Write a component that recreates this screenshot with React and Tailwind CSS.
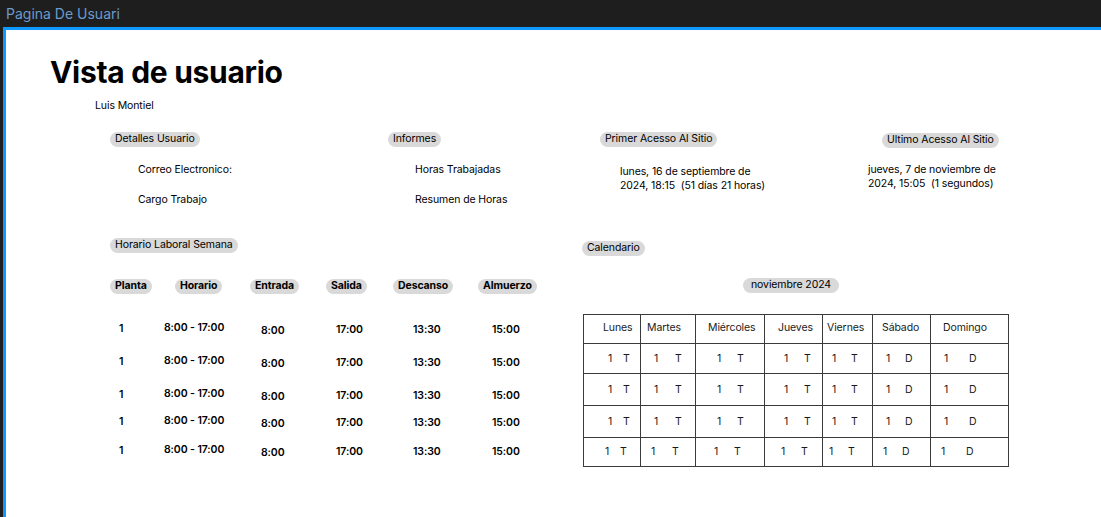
import React from "react";

const SCHEDULE_COLS = [
  { label: "Planta", w: "w-[54px]", hm: "ml-0", dm: "ml-[9px]", pt: "pt-[1px]", val: "1" },
  { label: "Horario", w: "w-[86px]", hm: "ml-[11px]", dm: "ml-0", pt: "pt-0", val: "8:00 - 17:00" },
  { label: "Entrada", w: "w-[76px]", hm: "ml-0", dm: "ml-[11px]", pt: "pt-[3px]", val: "8:00" },
  { label: "Salida", w: "w-[67px]", hm: "ml-0", dm: "ml-[10px]", pt: "pt-[2px]", val: "17:00" },
  { label: "Descanso", w: "w-[85px]", hm: "ml-0", dm: "ml-[20px]", pt: "pt-[2px]", val: "13:30" },
  { label: "Almuerzo", w: "w-[80px]", hm: "ml-0", dm: "ml-[14px]", pt: "pt-[2px]", val: "15:00" },
];

// margin above each schedule row
const ROW_GAPS = ["mt-[27px]", "mt-[15px]", "mt-[15px]", "mt-[9px]", "mt-[11px]"];

const DAYS = [
  { name: "Lunes", hp: "pl-[19px]", cp: "pl-[24px]", gap: "w-[15px]", tag: "T" },
  { name: "Martes", hp: "pl-[6px]", cp: "pl-[13px]", gap: "w-[21px]", tag: "T" },
  { name: "Miércoles", hp: "pl-[12px]", cp: "pl-[21px]", gap: "w-[20px]", tag: "T" },
  { name: "Jueves", hp: "pl-[13px]", cp: "pl-[19px]", gap: "w-[20px]", tag: "T" },
  { name: "Viernes", hp: "pl-[4px]", cp: "pl-[9px]", gap: "w-[19px]", tag: "T" },
  { name: "Sábado", hp: "pl-[9px]", cp: "pl-[13px]", gap: "w-[19px]", tag: "D" },
  { name: "Domingo", hp: "pl-[12px]", cp: "pl-[13px]", gap: "w-[25px]", tag: "D" },
];

const CAL_ROWS = [
  { h: "h-[30px]", shift: "" },
  { h: "h-[32px]", shift: "" },
  { h: "h-[32px]", shift: "" },
  { h: "h-[29px]", shift: "-translate-x-[3px]" },
];

function Pill({ children, className = "" }) {
  return (
    <div
      className={
        "flex h-[15px] w-fit items-center rounded-full bg-[#d9d9d9] px-[5px] text-[10.5px] leading-none tracking-[-0.1px] whitespace-nowrap " +
        className
      }
    >
      {children}
    </div>
  );
}

function Schedule() {
  return (
    <div className="mt-[26px] flex">
      {SCHEDULE_COLS.map((c) => (
        <div key={c.label} className={"flex flex-col shrink-0 " + c.w}>
          <Pill className={"font-bold px-[4px] " + c.hm}>{c.label}</Pill>
          {ROW_GAPS.map((g, i) => (
            <div key={i} className={"h-[18px] " + g + " " + c.pt}>
              <div className={"text-[10.5px] leading-[14px] font-semibold tracking-[-0.1px] whitespace-nowrap " + c.dm}>
                {c.val}
              </div>
            </div>
          ))}
        </div>
      ))}
    </div>
  );
}

function Calendar() {
  return (
    <div className="ml-[1px] mt-[21px] grid w-[426px] grid-cols-[57px_55px_69px_58px_50px_58px_78px] border-l border-t border-[#3a3a3a] text-[10.5px] tracking-[-0.1px] text-[#1a1a1a]">
      {DAYS.map((d) => (
        <div
          key={d.name}
          className={"flex h-[29px] items-center border-b border-r border-[#3a3a3a] pb-[3px] " + d.hp}
        >
          {d.name}
        </div>
      ))}
      {CAL_ROWS.map((r, ri) =>
        DAYS.map((d) => (
          <div
            key={ri + d.name}
            className={"flex items-center border-b border-r border-[#3a3a3a] " + r.h + " " + d.cp}
          >
            <div className={"flex " + r.shift}>
              <span className={"inline-block " + d.gap}>1</span>
              <span>{d.tag}</span>
            </div>
          </div>
        ))
      )}
    </div>
  );
}

export default function App() {
  return (
    <div className="flex h-[517px] w-full flex-col overflow-hidden bg-[#1e1e1e] font-['Inter',sans-serif] text-black">
      <div className="flex h-[27px] shrink-0 items-center px-[6px] text-[14px] text-[#6a9bcc]">
        Pagina De Usuari
      </div>

      <div className="ml-[3px] flex-1 border-l-[3px] border-t-[3px] border-[#0d99ff] bg-white">
        <h1 className="ml-[44px] mt-[24px] text-[30px] font-bold leading-[36px] tracking-[-0.3px]">
          Vista de usuario
        </h1>
        <div className="ml-[89px] mt-[9px] text-[10.5px] leading-[14px] tracking-[-0.1px]">Luis Montiel</div>

        <div className="ml-[104px] mt-[19px] flex items-start text-[10.5px] leading-[14px] tracking-[-0.1px]">
          <div className="w-[278px] shrink-0">
            <Pill>Detalles Usuario</Pill>
            <div className="ml-[28px] mt-[16px] flex flex-col gap-[16px]">
              <span>Correo Electronico:</span>
              <span>Cargo Trabajo</span>
            </div>
          </div>

          <div className="w-[212px] shrink-0">
            <Pill>Informes</Pill>
            <div className="ml-[27px] mt-[16px] flex flex-col gap-[16px]">
              <span>Horas Trabajadas</span>
              <span>Resumen de Horas</span>
            </div>
          </div>

          <div className="w-[268px] shrink-0">
            <Pill>Primer Acesso Al Sitio</Pill>
            <div className="ml-[20px] mt-[18px]">
              lunes, 16 de septiembre de
              <br />
              2024, 18:15&nbsp; (51 días 21 horas)
            </div>
          </div>

          <div className="pt-[1px]">
            <Pill className="ml-[14px] px-[4px]">Ultimo Acesso Al Sitio</Pill>
            <div className="mt-[15px]">
              jueves, 7 de noviembre de
              <br />
              2024, 15:05&nbsp; (1 segundos)
            </div>
          </div>
        </div>

        <div className="ml-[104px] mt-[31px] flex items-start">
          <div className="w-[472px] shrink-0">
            <Pill>Horario Laboral Semana</Pill>
            <Schedule />
          </div>

          <div className="pt-[3px]">
            <Pill>Calendario</Pill>
            <Pill className="ml-[161px] mt-[22px] px-[8px]">noviembre 2024</Pill>
            <Calendar />
          </div>
        </div>
      </div>
    </div>
  );
}
